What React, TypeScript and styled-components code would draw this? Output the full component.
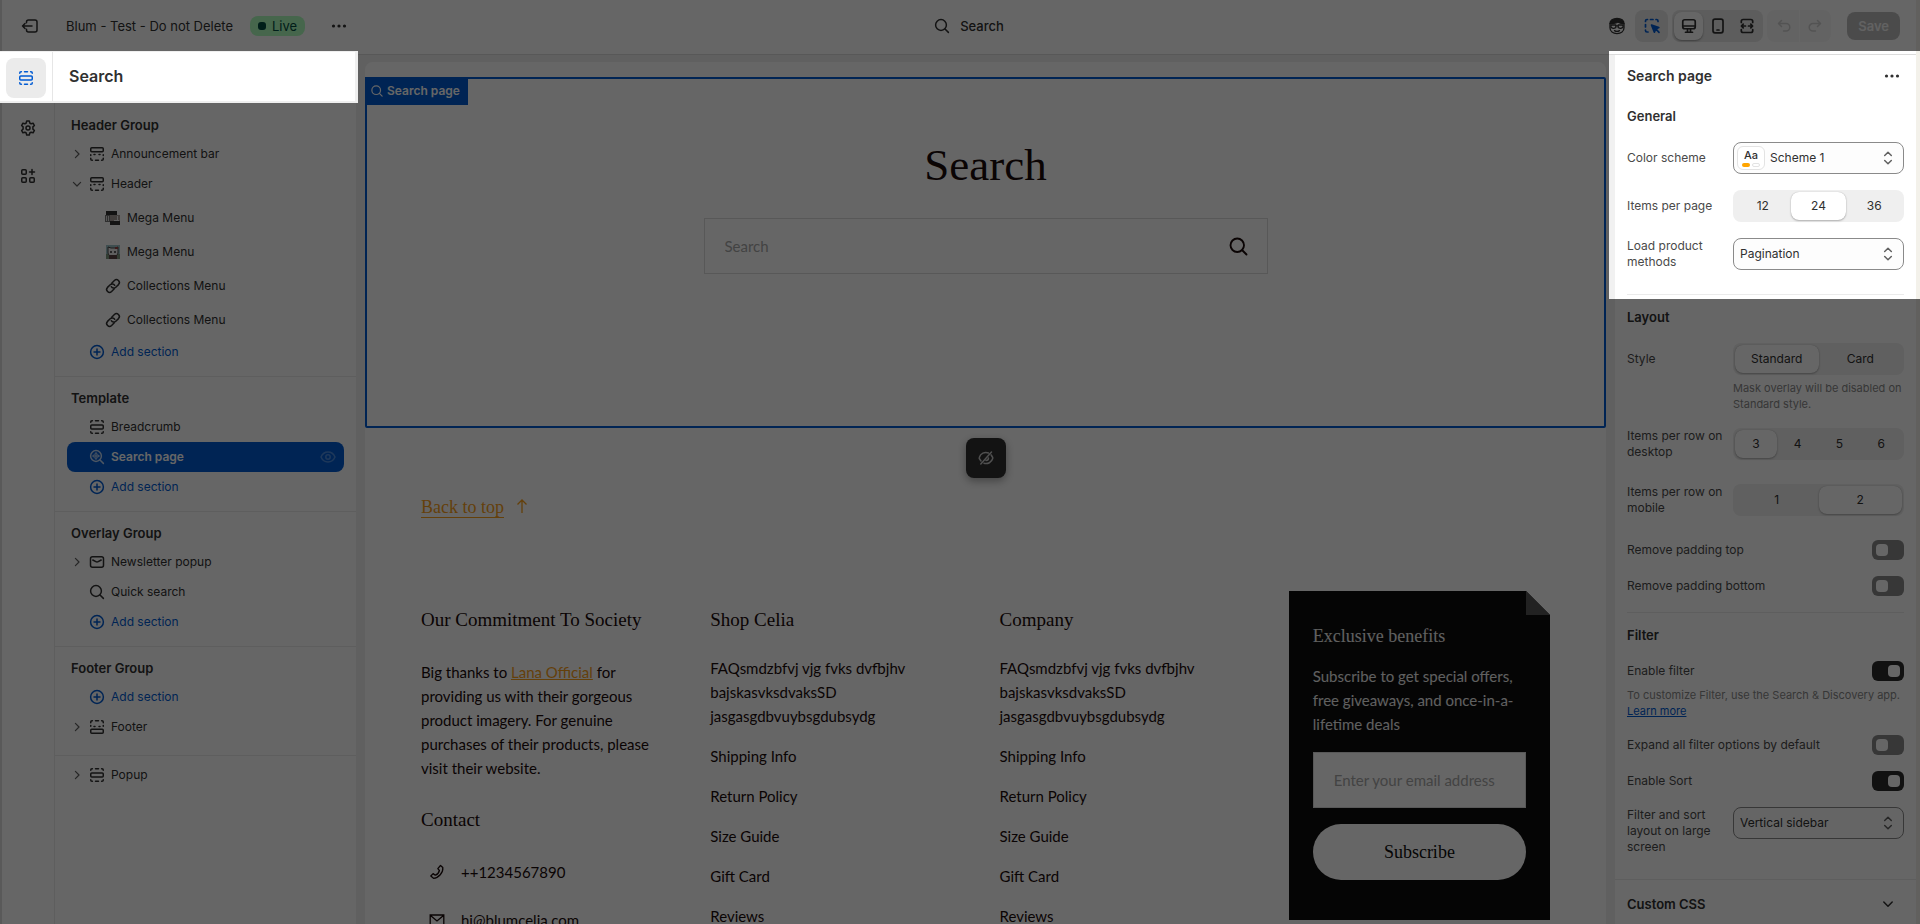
import React, { useState } from "react";
import styled, { createGlobalStyle, css } from "styled-components";

const ui = `Inter, "Liberation Sans", sans-serif`;
const body = `Lato, "Liberation Sans", sans-serif`;
const display = `"Liberation Serif", serif`;
const blue = "#005bd3";
const line = "#ebebeb";
const gold = "#f9a01b";

const Global = createGlobalStyle`
  *, *::before, *::after { box-sizing: border-box; }
  body { margin: 0; background: #fff; }
  button, input, select { font: inherit; color: inherit; }
  button { border: 0; background: none; padding: 0; cursor: pointer; }
  h1, h2, h3, p, ul { margin: 0; padding: 0; }
  ul { list-style: none; }
`;

/* ---------- Frame ---------- */

const Shell = styled.div`
  position: relative;
  height: 100vh;
  overflow: hidden;
`;

const Frame = styled.div`
  display: flex;
  flex-direction: column;
  height: 100%;
  border-left: 2px solid #dedede;
  border-right: 4px solid #f3f1ea;
  background: #f1f1f1;
  color: #303030;
  font: 12px/16px ${ui};
`;

const Scrim = styled.div`
  position: absolute;
  inset: 0;
  z-index: 5;
  pointer-events: none;
  background: rgba(0, 0, 0, 0.6);
  clip-path: polygon(
    evenodd,
    0 0, 100% 0, 100% 100%, 0 100%, 0 0,
    0 51px, 358px 51px, 358px 103px, 0 103px, 0 51px,
    0 0,
    100% 51px, calc(100% - 311px) 51px, calc(100% - 311px) 299px, 100% 299px, 100% 51px,
    0 0
  );
`;

const Topbar = styled.header`
  display: grid;
  grid-template-columns: 1fr auto 1fr;
  align-items: center;
  flex: none;
  height: 55px;
  padding: 0 16px 3px 18px;
  border-bottom: 1px solid #dcdcdc;
  background: #fff;
  font-size: 13px;
`;

const TopLeft = styled.div`
  display: flex;
  align-items: center;
`;

const ThemeName = styled.span`
  margin: 0 17px 0 26px;
`;

const Badge = styled.span`
  display: flex;
  align-items: center;
  gap: 6px;
  height: 20px;
  margin-right: 24px;
  padding: 0 8px;
  border-radius: 8px;
  background: #affebf;
  color: #014b40;

  &::before {
    content: "";
    width: 8px;
    height: 8px;
    border-radius: 3px;
    background: #014b40;
  }
`;

const PageName = styled.div`
  display: flex;
  align-items: center;
  gap: 8px;
  padding-left: 16px;
  font-weight: 500;
`;

const TopRight = styled.div`
  display: flex;
  align-items: center;
  justify-content: flex-end;
`;

const IconButton = styled.button`
  display: flex;
  align-items: center;
  justify-content: center;
  width: 20px;
  height: 20px;
`;

const Tool = styled.button<{ $on?: boolean; $blue?: boolean }>`
  display: flex;
  align-items: center;
  justify-content: center;
  width: 29px;
  height: 28px;
  border-radius: 8px;
  ${(p) => p.$blue && `color: ${blue};`}
  ${(p) => p.$on && "background: #fff; box-shadow: 0 1px 2px rgba(0, 0, 0, 0.35);"}
`;

const ToolGroup = styled.div<{ $quiet?: boolean }>`
  display: flex;
  height: 32px;
  margin-left: 4px;
  padding: 2px;
  border-radius: 8px;
  background: ${(p) => (p.$quiet ? "#f7f7f7" : "#e8e8e8")};
  color: ${(p) => (p.$quiet ? "#d0d0d0" : "#303030")};

  ${IconButton} + & {
    margin-left: 8px;
  }
  ${(p) =>
    p.$quiet &&
    css`
      padding: 0 2px;

      ${Tool} {
        width: 30px;
        height: 32px;
        border-radius: 0;
      }
      ${Tool} + ${Tool} {
        border-left: 1px solid #fff;
      }
    `}
`;

const Save = styled.button`
  height: 28px;
  margin-left: 16px;
  padding: 0 11px;
  border-radius: 8px;
  background: #bcbcbc;
  color: #f4f4f4;
  font-weight: 600;
`;

const Workspace = styled.div`
  display: flex;
  flex: 1;
  min-height: 0;
`;

/* ---------- Left panel ---------- */

const LeftPanel = styled.aside`
  display: flex;
  flex-direction: column;
  flex: none;
  width: 354px;
  background: #fff;
`;

const PanelHead = styled.div`
  position: relative;
  display: flex;
  flex: none;
  height: 52px;
  margin: -4px -2px 0 -2px;
  border: solid #efefef;
  border-width: 1px 3px 2px 0;
  background: #fff;
`;

const HeadRail = styled.div`
  width: 53px;
  padding: 6px;
  border-right: 1px solid #e6e6e6;
`;

const RailActive = styled.button`
  display: flex;
  align-items: center;
  justify-content: center;
  width: 40px;
  height: 40px;
  border-radius: 8px;
  background: #ebebeb;
  color: ${blue};
`;

const HeadTitle = styled.h1`
  padding: 14px 16px;
  font-size: 16px;
  line-height: 20px;
  font-weight: 600;
`;

const LeftBody = styled.div`
  display: flex;
  flex: 1;
  min-height: 0;
`;

const Rail = styled.nav`
  display: flex;
  flex-direction: column;
  align-items: center;
  gap: 28px;
  width: 53px;
  padding-top: 15px;
  border-right: 1px solid ${line};
`;

const Tree = styled.div`
  flex: 1;
  padding-top: 1px;
`;

const Group = styled.section`
  padding: 7px 12px 9px;

  & + & {
    border-top: 1px solid ${line};
  }
  &:nth-last-child(2) {
    padding-bottom: 13px;
  }
  &:last-child {
    padding-top: 4px;
  }
`;

const GroupTitle = styled.h2`
  padding: 6px 4px;
  font-size: 13px;
  line-height: 16px;
  font-weight: 600;
`;

const Row = styled.button<{ $tone?: "add" | "selected" }>`
  display: flex;
  align-items: center;
  width: 100%;
  height: 30px;
  border-radius: 8px;
  text-align: left;
  ${(p) => p.$tone === "add" && `color: ${blue};`}
  ${(p) =>
    p.$tone === "selected" &&
    css`
      background: ${blue};
      color: #fff;
      font-weight: 600;
    `}
`;

const Caret = styled.span`
  display: flex;
  width: 16px;
  margin: 0 2px;
  color: #616161;
`;

const RowLabel = styled.span`
  flex: 1;
  margin-left: 4px;
`;

const RowEnd = styled.span`
  display: flex;
  margin-right: 6px;
  opacity: 0.3;
`;

const SubList = styled.ul`
  padding: 2px 0 0 36px;
`;

const SubRow = styled.button`
  display: flex;
  align-items: center;
  gap: 4px;
  height: 34px;
`;

/* ---------- Preview ---------- */

const Preview = styled.main`
  flex: 1;
  min-width: 0;
  margin: 7px 9px 0;
  border-radius: 8px 8px 0 0;
  background: #fff;
  color: #1a0a0a;
  font: 15px/24px ${body};
`;

const Selected = styled.section`
  position: relative;
  display: flex;
  flex-direction: column;
  align-items: center;
  gap: 27px;
  margin-top: 15px;
  padding: 60px 24px 152px;
  border: 2px solid ${blue};
  border-radius: 2px;
`;

const SelectedTag = styled.div`
  position: absolute;
  top: -2px;
  left: -2px;
  display: flex;
  align-items: center;
  gap: 2px;
  height: 28px;
  padding: 0 8px 0 4px;
  background: ${blue};
  color: #fff;
  font: 600 12px/16px ${ui};
`;

const PageTitle = styled.h2`
  font: 400 45px/52px ${display};
`;

const SearchField = styled.label`
  display: flex;
  align-items: center;
  width: 564px;
  max-width: 100%;
  height: 56px;
  padding: 0 16px 0 20px;
  border: 1px solid #dcdcdc;

  input {
    flex: 1;
    min-width: 0;
    border: 0;
    padding: 0;
    outline: 0;
    background: none;
  }
  input::placeholder {
    color: #a8a8a8;
  }
`;

const HideButton = styled.button`
  position: absolute;
  bottom: -52px;
  left: 50%;
  transform: translateX(-50%);
  display: flex;
  align-items: center;
  justify-content: center;
  width: 40px;
  height: 40px;
  border-radius: 8px;
  background: #303030;
  box-shadow: 0 3px 8px rgba(0, 0, 0, 0.35);
  color: #c8c8c8;
`;

const BackToTop = styled.a`
  display: inline-flex;
  align-items: center;
  gap: 10px;
  margin: 67px 56px 72px;
  color: ${gold};
  font: 18px/24px ${display};
  text-decoration: none;

  span {
    text-decoration: underline;
    text-underline-offset: 4px;
  }
`;

const FooterGrid = styled.footer`
  display: grid;
  grid-template-columns: repeat(4, minmax(0, 1fr));
  gap: 28px;
  align-items: start;
  padding: 0 56px;
`;

const Column = styled.section`
  padding-top: 17px;
`;

const ColumnTitle = styled.h3`
  margin-bottom: 24px;
  font: 400 19px/24px ${display};
`;

const Story = styled.p`
  margin: 28px 0;
  padding-right: 24px;

  a {
    color: ${gold};
  }
`;

const LinkList = styled.ul`
  display: grid;
  gap: 16px;

  a {
    color: inherit;
    text-decoration: none;
  }
`;

const ContactList = styled.ul`
  display: grid;
  gap: 24px;
  padding-top: 4px;
`;

const ContactItem = styled.li`
  display: flex;
  align-items: center;
  gap: 16px;
  padding-left: 8px;
`;

const Card = styled.form`
  position: relative;
  padding: 33px 24px 40px;
  background: #0e0e0e;
  color: #f0f0f0;
  clip-path: polygon(0 0, calc(100% - 24px) 0, 100% 24px, 100% 100%, 0 100%);

  &::before {
    content: "";
    position: absolute;
    top: 0;
    right: 0;
    width: 24px;
    height: 24px;
    background: #555;
  }
  h3 {
    margin-bottom: 16px;
    font-size: 18px;
  }
`;

const EmailInput = styled.input`
  display: block;
  width: 100%;
  height: 56px;
  margin: 16px 0;
  padding: 0 20px;
  border: 1px solid #dcdcdc;
  border-radius: 0;
  background: #fff;

  &::placeholder {
    color: #a8a8a8;
  }
`;

const Subscribe = styled.button`
  display: block;
  width: 100%;
  height: 56px;
  border-radius: 28px;
  background: #fff;
  color: #0e0e0e;
  font: 18px/24px ${display};
`;

/* ---------- Settings panel ---------- */

const Settings = styled.aside`
  flex: none;
  width: 301px;
  background: #fff;
`;

const SettingsHead = styled.div`
  display: flex;
  align-items: center;
  justify-content: space-between;
  height: 43px;
  padding: 0 14px 2px 12px;

  h2 {
    font-size: 14px;
    line-height: 20px;
    font-weight: 600;
  }
`;

const Section = styled.section`
  margin: 0 12px;
  padding-bottom: 8px;

  & + & {
    padding-top: 4px;
    border-top: 1px solid ${line};
  }
`;

const SectionTitle = styled.h3`
  padding: 10px 0;
  font-size: 13px;
  line-height: 16px;
  font-weight: 600;
`;

const Field = styled.div<{ $tall?: boolean }>`
  display: grid;
  grid-template-columns: 106px minmax(0, 1fr);
  align-items: start;
  margin-bottom: ${(p) => (p.$tall ? 8 : 0)}px;
  padding: 8px 0;
`;

const FieldLabel = styled.label`
  display: flex;
  align-items: center;
  min-height: 32px;
  padding-right: 8px;
  color: #4a4a4a;
`;

const Help = styled.p`
  color: #8a8a8a;
  font-size: 11px;
  line-height: 16px;

  a {
    color: ${blue};
  }
`;

const SelectBox = styled.div<{ $swatch?: boolean }>`
  display: grid;
  align-items: center;
  height: 32px;

  > * {
    grid-area: 1 / 1;
  }
  select {
    width: 100%;
    height: 32px;
    padding: 0 24px 0 ${(p) => (p.$swatch ? 36 : 6)}px;
    border: 1px solid #8a8a8a;
    border-radius: 8px;
    appearance: none;
    background: #fdfdfd;
  }
  > svg {
    justify-self: end;
    margin-right: 6px;
    color: #616161;
    pointer-events: none;
  }
`;

const Swatch = styled.span`
  display: grid;
  grid-template-columns: 8px 8px;
  justify-content: center;
  align-content: center;
  gap: 1px 2px;
  width: 28px;
  height: 24px;
  margin-left: 4px;
  border: 1px solid #e3e3e3;
  border-radius: 6px;
  background: #fff;
  pointer-events: none;

  b {
    grid-column: 1 / -1;
    font-size: 11px;
    line-height: 13px;
    font-weight: 500;
    text-align: center;
  }
  i {
    height: 4px;
    border-radius: 2px;
    background: #ffa500;
  }
  i + i {
    border: 1px solid #e3e3e3;
    background: #fff;
  }
`;

const Segments = styled.div`
  display: flex;
  height: 32px;
  padding: 2px;
  border-radius: 8px;
  background: #efefef;

  label {
    flex: 1;
    display: flex;
    align-items: center;
    justify-content: center;
    border-radius: 8px;
    cursor: pointer;
  }
  label:has(input:checked) {
    background: #fff;
    box-shadow: 0 1px 2px rgba(0, 0, 0, 0.25), 0 0 1px rgba(0, 0, 0, 0.25);
  }
  input {
    position: absolute;
    opacity: 0;
    pointer-events: none;
  }
`;

const SegmentHelp = styled(Help)`
  margin: 5px 0 -8px;
  white-space: nowrap;

  span {
    display: block;
  }
`;

const ToggleRow = styled.div`
  display: flex;
  align-items: center;
  justify-content: space-between;
  height: 36px;
  color: #4a4a4a;

  & + ${Help} {
    margin: -2px 0 8px;
  }
`;

const Switch = styled.input`
  appearance: none;
  display: flex;
  align-items: center;
  width: 32px;
  height: 20px;
  margin: 0;
  padding: 0 4px;
  border-radius: 6px;
  background: #8a8a8a;

  &::before {
    content: "";
    width: 12px;
    height: 12px;
    border-radius: 4px;
    background: #fff;
  }
  &:checked {
    justify-content: flex-end;
    background: #2b2b2b;
  }
`;

const CustomCss = styled.button`
  display: flex;
  align-items: center;
  justify-content: space-between;
  width: 100%;
  height: 49px;
  padding: 0 18px 0 12px;
  border-top: 1px solid ${line};
  font-size: 13px;
  font-weight: 600;
`;

/* ---------- Icons ---------- */

const Svg = ({ children, size = 20, sw = 1.5 }: { children: React.ReactNode; size?: number; sw?: number }) => (
  <svg width={size} height={size} viewBox="0 0 20 20" fill="none" stroke="currentColor" strokeWidth={sw}
    strokeLinecap="round" strokeLinejoin="round" aria-hidden="true">{children}</svg>
);

const IconSection = () => (
  <Svg>
    <rect x="3.75" y="7.9" width="12.5" height="4.2" rx="1" />
    <path d="M3.75 5.2v-.2c0-.7.55-1.25 1.25-1.25h.4M8.5 3.75h3M14.6 3.75h.4c.7 0 1.25.55 1.25 1.25v.2M3.75 14.8v.2c0 .7.55 1.25 1.25 1.25h.4M8.5 16.25h3M14.6 16.25h.4c.7 0 1.25-.55 1.25-1.25v-.2" />
  </Svg>
);
const IconHeader = () => (
  <Svg>
    <rect x="3.75" y="3.75" width="12.5" height="4" rx="1" />
    <path d="M3.75 11.5v-.7M16.25 11.5v-.7M7 10.5h1M12 10.5h1M3.75 14.3v.7c0 .7.55 1.25 1.25 1.25h.4M8.5 16.25h3M14.6 16.25h.4c.7 0 1.25-.55 1.25-1.25v-.7" />
  </Svg>
);
const IconFooter = () => (
  <Svg>
    <rect x="3.75" y="12.25" width="12.5" height="4" rx="1" />
    <path d="M3.75 8.5v.7M16.25 8.5v.7M7 9.5h1M12 9.5h1M3.75 5.7v-.7c0-.7.55-1.25 1.25-1.25h.4M8.5 3.75h3M14.6 3.75h.4c.7 0 1.25.55 1.25 1.25v.7" />
  </Svg>
);
const IconSearch = ({ size = 20, sw = 1.5 }: { size?: number; sw?: number }) => (
  <Svg size={size} sw={sw}><circle cx="9" cy="9" r="5.4" /><path d="m13 13 3.4 3.4" /></Svg>
);
const IconSearchPlus = () => (
  <Svg>
    <g opacity="0.75">
      <circle cx="9" cy="9" r="5.4" /><path d="m13 13 3.4 3.4" />
      <path d="M9 5.5v7M5.5 9h7" strokeWidth="1" /><circle cx="9" cy="9" r="2.4" strokeWidth="0.8" />
    </g>
  </Svg>
);
const IconPlus = () => (
  <Svg><circle cx="10" cy="10" r="6.4" /><path d="M10 7v6M7 10h6" /></Svg>
);
const IconMail = () => (
  <Svg><rect x="3.5" y="4.75" width="13" height="10.5" rx="2" /><path d="m5.8 8 3 1.6c.7.4 1.7.4 2.4 0l3-1.6" /></Svg>
);
const IconLink = () => (
  <Svg>
    <path d="M8.7 7.2l2.7-2.7a2.9 2.9 0 0 1 4.1 4.1l-2.7 2.7a2.9 2.9 0 0 1-4.5-.6" />
    <path d="M11.3 12.8l-2.7 2.7a2.9 2.9 0 0 1-4.1-4.1l2.7-2.7a2.9 2.9 0 0 1 4.5.6" />
  </Svg>
);
const IconDots = () => (
  <svg width="20" height="20" viewBox="0 0 20 20" fill="currentColor" aria-hidden="true">
    <circle cx="4.5" cy="10" r="1.6" /><circle cx="10" cy="10" r="1.6" /><circle cx="15.5" cy="10" r="1.6" />
  </svg>
);
const IconExit = () => (
  <Svg><path d="M6.5 6.8V6a2 2 0 0 1 2-2H15a2 2 0 0 1 2 2v8a2 2 0 0 1-2 2H8.5a2 2 0 0 1-2-2v-.8M12 10H2.5M5 7.5 2.5 10 5 12.5" /></Svg>
);
const IconGear = () => (
  <Svg>
    <path d="M8.7 3h2.6l.5 2 1.3.8 2-.6 1.3 2.300-1.500 1.400v2.200l1.500 1.400-1.300 2.300-2-.6-1.300.8-.5 2H8.700l-.5-2-1.300-.8-2 .6-1.300-2.300 1.500-1.400V8.900L3.600 7.500l1.300-2.300 2 .6L8.200 5z" />
    <circle cx="10" cy="10" r="2" />
  </Svg>
);
const IconApps = () => (
  <Svg>
    <rect x="3.750" y="3.750" width="4.500" height="4.500" rx="1" /><rect x="3.750" y="11.750" width="4.500" height="4.500" rx="1" />
    <rect x="11.750" y="11.750" width="4.500" height="4.500" rx="1" /><path d="M14 3.500v5M11.500 6h5" />
  </Svg>
);
const IconRight = () => <Svg size={16}><path d="m8 5.500 4.500 4.500L8 14.500" /></Svg>;
const IconDown = () => <Svg size={16}><path d="M5.500 8l4.500 4.500L14.500 8" /></Svg>;
const IconChevron = () => <Svg><path d="M5.800 8l4.200 4.200L14.200 8" /></Svg>;
const IconUpDown = () => <Svg><path d="M6.700 7.500 10 4.300l3.300 3.200M6.700 12.500 10 15.700l3.300-3.200" /></Svg>;
const IconEye = () => (
  <Svg><path d="M3 10c1.300-3 3.900-5 7-5s5.700 2 7 5c-1.300 3-3.900 5-7 5s-5.700-2-7-5Z" /><circle cx="10" cy="10" r="2.200" /></Svg>
);
const IconEyeOff = () => (
  <Svg><path d="M12.500 5A6.800 6.800 0 0 0 3.300 9.500a1.300 1.300 0 0 0 0 1L5 13M15.200 7l1.500 2.500a1.300 1.300 0 0 1 0 1A6.800 6.800 0 0 1 8 15.200M10 12.500a2.500 2.500 0 0 0 2.500-2.500M4.800 16 15.500 4" /></Svg>
);
const IconSelect = () => (
  <Svg sw={1.7}>
    <path d="M3.500 5.500V5c0-.8.7-1.500 1.500-1.500h.5M8.500 3.500h2.500M14 3.500h.5c.8 0 1.500.7 1.500 1.500v.5M3.500 8.500V11M3.500 14v.5c0 .8.7 1.500 1.500 1.500h1" />
    <path d="m9.500 9 7.300 2.600-3 1.400-1.400 3.200zM14 13.200l3 3.100" fill="currentColor" />
  </Svg>
);
const IconDesktop = () => (
  <Svg sw={1.7}><rect x="3.750" y="3.750" width="12.500" height="9" rx="2" /><path d="M4 10h12M8.500 13v3M11.500 13v3M6.500 16.250h7" /></Svg>
);
const IconMobile = () => (
  <Svg sw={1.7}><rect x="5" y="3.200" width="10" height="13.600" rx="2" /><path d="M9 14h2" /></Svg>
);
const IconFull = () => (
  <Svg sw={1.7}>
    <path d="M4.300 6.500V5.300c0-1 .8-1.800 1.800-1.800h7.800c1 0 1.800.8 1.800 1.800v1.200M4.300 13.500v1.200c0 1 .8 1.800 1.800 1.800h7.800c1 0 1.800-.8 1.800-1.800v-1.200M4.500 10h4M15.500 10h-4M6.200 8.200 4.400 10l1.800 1.800M13.800 8.200l1.800 1.800-1.800 1.800" />
  </Svg>
);
const IconUndo = () => <Svg><path d="M7.500 4.500 4.500 7.500l3 3M4.800 7.500h7.200a3.800 3.800 0 0 1 0 7.600H9.500" /></Svg>;
const IconRedo = () => <Svg><path d="M12.500 4.500l3 3-3 3M15.200 7.500H8a3.800 3.800 0 0 0 0 7.600h2.500" /></Svg>;
const IconFace = () => (
  <Svg sw={1.3}>
    <path d="M3 7.500C2.800 4.500 6 2.400 10 2.400c4.300 0 7.200 2.100 6.900 5.100-2.800-.1-4.600-.5-6-1.600C9.500 7 6.500 7.500 3 7.500Z" fill="currentColor" />
    <path d="M3 7.500v4.300C3 15.500 6 17.600 10 17.600s7-2.100 7-5.800V7.500M7.500 14.600c1.500.9 3.500.9 5 0" />
    <path d="M4 9h4.800v2.400c-1.500 1.300-3.800 1.200-4.800-.2zM16 9h-4.800v2.400c1.500 1.300 3.800 1.200 4.800-.2zM8.800 9.800h2.400" />
  </Svg>
);
const IconArrowUp = () => (
  <svg width="16" height="18" viewBox="0 0 16 18" fill="none" stroke="currentColor" strokeWidth="1.3" aria-hidden="true">
    <path d="M8 15V2M3.500 6.500 8 2l4.500 4.500" />
  </svg>
);
const IconPhone = () => (
  <svg width="16" height="16" viewBox="0 0 16 16" fill="none" stroke="currentColor" strokeWidth="1.3" strokeLinejoin="round" aria-hidden="true">
    <path d="M11.500 1.500 13.800 3.600c.6 5-4.300 10.600-9.300 10.700L1.800 12l2.300-2.400 2.200 1.600c1.800-.6 3.700-2.900 4.100-4.700L8.800 4.600z" />
  </svg>
);
const IconEnvelope = () => (
  <svg width="16" height="16" viewBox="0 0 16 16" fill="none" stroke="currentColor" strokeWidth="1.3" aria-hidden="true">
    <path d="M1.200 3h13.600v10.500H1.200zM1.500 3.500 8 9l6.500-5.500" />
  </svg>
);
const ThumbHouse = () => (
  <svg width="20" height="20" viewBox="0 0 20 20" aria-hidden="true">
    <path d="M3 3h11v5H3z" fill="#303030" /><path d="M2 7h6v7H2z" fill="#777" /><path d="M3 8h1v5H3zM5 8h1v5H5z" fill="#ddd" />
    <path d="M7 7h10v10H7z" fill="#a99f99" /><path d="M7 13h10v4H7z" fill="#333" /><path d="M14 8h1v4h-1zM11 12h5v1h-5z" fill="#eee" />
  </svg>
);
const ThumbCat = () => (
  <svg width="20" height="20" viewBox="0 0 20 20" aria-hidden="true">
    <path d="M3 3h14v14H3z" fill="#9fc4c9" /><path d="M3 12h14v5H3z" fill="#7f9a80" />
    <path d="M5 5l3 1h4l3-1v6c0 2-2 3-5 3s-5-1-5-3z" fill="#eee" stroke="#444" /><path d="M6 13h8v4H6z" fill="#5a4444" />
    <circle cx="8" cy="10" r="1" fill="#333" /><circle cx="12" cy="10" r="1" fill="#333" /><path d="M12 5h3v2h-3z" fill="#944" />
  </svg>
);

/* ---------- Parts ---------- */

type TreeRowProps = {
  icon: React.ReactNode;
  label: string;
  caret?: "right" | "down";
  tone?: "add" | "selected";
  end?: React.ReactNode;
};

const TreeRow = ({ icon, label, caret, tone, end }: TreeRowProps) => (
  <Row type="button" $tone={tone}>
    <Caret>{caret === "right" ? <IconRight /> : caret === "down" ? <IconDown /> : null}</Caret>
    {icon}
    <RowLabel>{label}</RowLabel>
    {end && <RowEnd>{end}</RowEnd>}
  </Row>
);

const AddSection = () => <TreeRow icon={<IconPlus />} label="Add section" tone="add" />;

const SegmentField = ({ id, label, options, initial, tall, help }: {
  id: string; label: string; options: string[]; initial: string; tall?: boolean; help?: string[];
}) => {
  const [value, setValue] = useState(initial);
  return (
    <Field $tall={tall}>
      <FieldLabel as="span" id={id}>{label}</FieldLabel>
      <div>
        <Segments role="radiogroup" aria-labelledby={id}>
          {options.map((option) => (
            <label key={option}>
              <input type="radio" name={id} checked={value === option} onChange={() => setValue(option)} />
              {option}
            </label>
          ))}
        </Segments>
        {help && <SegmentHelp>{help.map((text) => <span key={text}>{text}</span>)}</SegmentHelp>}
      </div>
    </Field>
  );
};

const SelectField = ({ id, label, value, tall, swatch }: {
  id: string; label: string; value: string; tall?: boolean; swatch?: boolean;
}) => (
  <Field $tall={tall}>
    <FieldLabel htmlFor={id}>{label}</FieldLabel>
    <SelectBox $swatch={swatch}>
      <select id={id}><option>{value}</option></select>
      {swatch && <Swatch><b>Aa</b><i /><i /></Swatch>}
      <IconUpDown />
    </SelectBox>
  </Field>
);

const ToggleField = ({ id, label, on }: { id: string; label: string; on?: boolean }) => (
  <ToggleRow>
    <label htmlFor={id}>{label}</label>
    <Switch id={id} type="checkbox" role="switch" defaultChecked={on} />
  </ToggleRow>
);

const links = ["FAQsmdzbfvj vjg fvks dvfbjhv bajskasvksdvaksSD jasgasgdbvuybsgdubsydg", "Shipping Info", "Return Policy", "Size Guide", "Gift Card", "Reviews"];

const LinkColumn = ({ title }: { title: string }) => (
  <Column>
    <ColumnTitle>{title}</ColumnTitle>
    <LinkList>
      {links.map((text) => <li key={text}><a href="#top">{text}</a></li>)}
    </LinkList>
  </Column>
);

export default function App() {
  return (
    <Shell>
      <Global />
      <Frame>
        <Topbar>
          <TopLeft>
            <IconButton type="button" aria-label="Exit"><IconExit /></IconButton>
            <ThemeName>Blum - Test - Do not Delete</ThemeName>
            <Badge>Live</Badge>
            <IconButton type="button" aria-label="More actions"><IconDots /></IconButton>
          </TopLeft>
          <PageName><IconSearch /> Search</PageName>
          <TopRight>
            <IconButton type="button" aria-label="Assistant"><IconFace /></IconButton>
            <ToolGroup>
              <Tool type="button" $blue aria-label="Inspector"><IconSelect /></Tool>
            </ToolGroup>
            <ToolGroup>
              <Tool type="button" $on aria-label="Desktop"><IconDesktop /></Tool>
              <Tool type="button" aria-label="Mobile"><IconMobile /></Tool>
              <Tool type="button" aria-label="Fullscreen"><IconFull /></Tool>
            </ToolGroup>
            <ToolGroup $quiet>
              <Tool type="button" aria-label="Undo"><IconUndo /></Tool>
              <Tool type="button" aria-label="Redo"><IconRedo /></Tool>
            </ToolGroup>
            <Save type="button">Save</Save>
          </TopRight>
        </Topbar>

        <Workspace>
          <LeftPanel>
            <PanelHead>
              <HeadRail><RailActive type="button" aria-label="Sections"><IconSection /></RailActive></HeadRail>
              <HeadTitle>Search</HeadTitle>
            </PanelHead>
            <LeftBody>
              <Rail>
                <IconButton type="button" aria-label="Theme settings"><IconGear /></IconButton>
                <IconButton type="button" aria-label="Apps"><IconApps /></IconButton>
              </Rail>
              <Tree>
                <Group>
                  <GroupTitle>Header Group</GroupTitle>
                  <TreeRow icon={<IconHeader />} label="Announcement bar" caret="right" />
                  <TreeRow icon={<IconHeader />} label="Header" caret="down" />
                  <SubList>
                    <li><SubRow type="button"><ThumbHouse />Mega Menu</SubRow></li>
                    <li><SubRow type="button"><ThumbCat />Mega Menu</SubRow></li>
                    <li><SubRow type="button"><IconLink />Collections Menu</SubRow></li>
                    <li><SubRow type="button"><IconLink />Collections Menu</SubRow></li>
                  </SubList>
                  <AddSection />
                </Group>
                <Group>
                  <GroupTitle>Template</GroupTitle>
                  <TreeRow icon={<IconSection />} label="Breadcrumb" />
                  <TreeRow icon={<IconSearchPlus />} label="Search page" tone="selected" end={<IconEye />} />
                  <AddSection />
                </Group>
                <Group>
                  <GroupTitle>Overlay Group</GroupTitle>
                  <TreeRow icon={<IconMail />} label="Newsletter popup" caret="right" />
                  <TreeRow icon={<IconSearch />} label="Quick search" />
                  <AddSection />
                </Group>
                <Group>
                  <GroupTitle>Footer Group</GroupTitle>
                  <AddSection />
                  <TreeRow icon={<IconFooter />} label="Footer" caret="right" />
                </Group>
                <Group>
                  <TreeRow icon={<IconSection />} label="Popup" caret="right" />
                </Group>
              </Tree>
            </LeftBody>
          </LeftPanel>

          <Preview id="top">
            <Selected>
              <SelectedTag><IconSearch size={16} />Search page</SelectedTag>
              <PageTitle>Search</PageTitle>
              <SearchField>
                <input type="text" placeholder="Search" aria-label="Search" />
                <IconSearch size={25} />
              </SearchField>
              <HideButton type="button" aria-label="Hide section"><IconEyeOff /></HideButton>
            </Selected>
            <BackToTop href="#top"><span>Back to top</span><IconArrowUp /></BackToTop>
            <FooterGrid>
              <Column>
                <ColumnTitle>Our Commitment To Society</ColumnTitle>
                <Story>
                  Big thanks to <a href="#top">Lana Official</a> for providing us with their gorgeous product imagery.
                  For genuine purchases of their products, please visit their website.
                </Story>
                <ColumnTitle>Contact</ColumnTitle>
                <ContactList>
                  <ContactItem><IconPhone />++1234567890</ContactItem>
                  <ContactItem><IconEnvelope />hi@blumcelia.com</ContactItem>
                </ContactList>
              </Column>
              <LinkColumn title="Shop Celia" />
              <LinkColumn title="Company" />
              <Card onSubmit={(e) => e.preventDefault()}>
                <ColumnTitle>Exclusive benefits</ColumnTitle>
                <p>Subscribe to get special offers, free giveaways, and once-in-a-lifetime deals</p>
                <EmailInput type="email" placeholder="Enter your email address" aria-label="Email address" />
                <Subscribe type="submit">Subscribe</Subscribe>
              </Card>
            </FooterGrid>
          </Preview>

          <Settings>
            <SettingsHead>
              <h2>Search page</h2>
              <IconButton type="button" aria-label="Section actions"><IconDots /></IconButton>
            </SettingsHead>
            <Section>
              <SectionTitle>General</SectionTitle>
              <SelectField id="scheme" label="Color scheme" value="Scheme 1" swatch />
              <SegmentField id="per-page" label="Items per page" options={["12", "24", "36"]} initial="24" />
              <SelectField id="load" label="Load product methods" value="Pagination" tall />
            </Section>
            <Section>
              <SectionTitle>Layout</SectionTitle>
              <SegmentField id="style" label="Style" options={["Standard", "Card"]} initial="Standard" tall
                help={["Mask overlay will be disabled on", "Standard style."]} />
              <SegmentField id="row-desktop" label="Items per row on desktop" options={["3", "4", "5", "6"]} initial="3" tall />
              <SegmentField id="row-mobile" label="Items per row on mobile" options={["1", "2"]} initial="2" tall />
              <ToggleField id="pad-top" label="Remove padding top" />
              <ToggleField id="pad-bottom" label="Remove padding bottom" />
            </Section>
            <Section>
              <SectionTitle>Filter</SectionTitle>
              <ToggleField id="filter" label="Enable filter" on />
              <Help>To customize Filter, use the Search &amp; Discovery app. <a href="#top">Learn more</a></Help>
              <ToggleField id="expand" label="Expand all filter options by default" />
              <ToggleField id="sort" label="Enable Sort" on />
              <SelectField id="sidebar" label="Filter and sort layout on large screen" value="Vertical sidebar" tall />
            </Section>
            <CustomCss type="button">Custom CSS<IconChevron /></CustomCss>
          </Settings>
        </Workspace>
      </Frame>
      <Scrim />
    </Shell>
  );
}
